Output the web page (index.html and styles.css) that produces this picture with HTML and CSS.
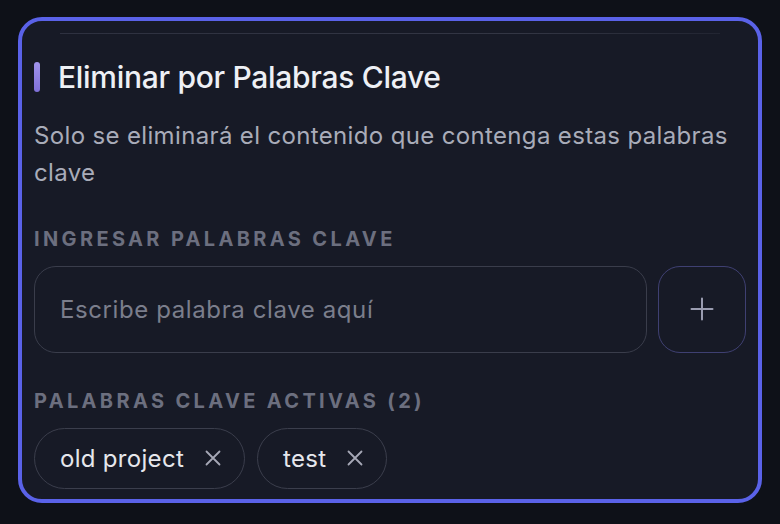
FILE: index.html
```html
<!DOCTYPE html>
<html lang="es">
<head>
<meta charset="utf-8">
<title>Eliminar por Palabras Clave</title>
<link rel="stylesheet" href="styles.css">
</head>
<body>
<div class="card">
  <div class="divider"></div>
  <div class="title-row">
    <span class="accent"></span>
    <h2 class="title">Eliminar por Palabras Clave</h2>
  </div>
  <p class="desc">Solo se eliminará el contenido que contenga estas palabras clave</p>
  <div class="label">Ingresar palabras clave</div>
  <div class="input-row">
    <div class="input"><span class="placeholder">Escribe palabra clave aquí</span></div>
    <button class="add-btn" aria-label="Agregar">
      <svg width="24" height="24" viewBox="0 0 24 24" fill="none" stroke="currentColor" stroke-width="2" stroke-linecap="round"><path d="M12 1.5v21M1.5 12h21"/></svg>
    </button>
  </div>
  <div class="label label-active">Palabras clave activas (2)</div>
  <div class="chips">
    <span class="chip">old project
      <svg class="x" width="16" height="16" viewBox="0 0 16 16" fill="none" stroke="currentColor" stroke-width="1.8" stroke-linecap="round"><path d="M1.5 1.5l13 13M14.5 1.5l-13 13"/></svg>
    </span>
    <span class="chip">test
      <svg class="x" width="16" height="16" viewBox="0 0 16 16" fill="none" stroke="currentColor" stroke-width="1.8" stroke-linecap="round"><path d="M1.5 1.5l13 13M14.5 1.5l-13 13"/></svg>
    </span>
  </div>
</div>
</body>
</html>
```
FILE: styles.css
```css
* { box-sizing: border-box; }
html, body { margin: 0; padding: 0; }
body {
  background: #0e1118;
  font-family: Inter, "Noto Sans", "Liberation Sans", sans-serif;
  width: 780px;
  height: 524px;
  overflow: hidden;
  padding: 17px 18px 0;
}
.card {
  width: 744px;
  height: 486px;
  border: 4px solid #5a62e8;
  border-radius: 24px;
  background: #171a26;
  padding: 12px 12px 0;
  overflow: hidden;
}
.divider {
  height: 1px;
  margin: 0 26px;
  background: linear-gradient(90deg, #2e3140 0%, #333644 70%, #222532 100%);
}
.title-row {
  display: flex;
  align-items: center;
  gap: 18px;
  margin-top: 25px;
  height: 36px;
}
.accent {
  width: 6px;
  height: 30px;
  border-radius: 3px;
  background: linear-gradient(180deg, #a194ec, #7f70d8);
}
.title {
  margin: 0;
  font-size: 30px;
  font-weight: 500;
  line-height: 36px;
  color: #eef0f5;
  letter-spacing: -0.3px;
}
.desc {
  margin: 22px 0 0;
  font-size: 24px;
  line-height: 37.4px;
  letter-spacing: 0.35px;
  color: #a9acb9;
}
.label {
  margin-top: 33px;
  font-size: 20px;
  line-height: 28px;
  font-weight: 700;
  text-transform: uppercase;
  letter-spacing: 3.35px;
  color: #6c6f7f;
}
.input-row {
  display: flex;
  gap: 11px;
  margin-top: 13px;
}
.input {
  flex: 1;
  height: 87px;
  border: 1.5px solid #3a3d4b;
  border-radius: 22px;
  padding: 0 25px;
  display: flex;
  align-items: center;
}
.placeholder {
  font-size: 24px;
  letter-spacing: 0.6px;
  color: #7b7e8c;
}
.add-btn {
  width: 88px;
  height: 87px;
  border: 1.5px solid #3f4072;
  border-radius: 22px;
  background: transparent;
  color: #9a9cb0;
  display: flex;
  align-items: center;
  justify-content: center;
  padding: 0;
}
.label-active { margin-top: 34px; }
.chips {
  display: flex;
  gap: 12px;
  margin-top: 13px;
}
.chip {
  display: inline-flex;
  align-items: center;
  height: 61px;
  padding: 0 23px 0 25px;
  border: 1.5px solid #3b3e4c;
  border-radius: 31px;
  font-size: 24px;
  letter-spacing: 0.3px;
  color: #e6e7ec;
}
.x {
  margin-left: 21px;
  color: #a6a8b6;
}
```
